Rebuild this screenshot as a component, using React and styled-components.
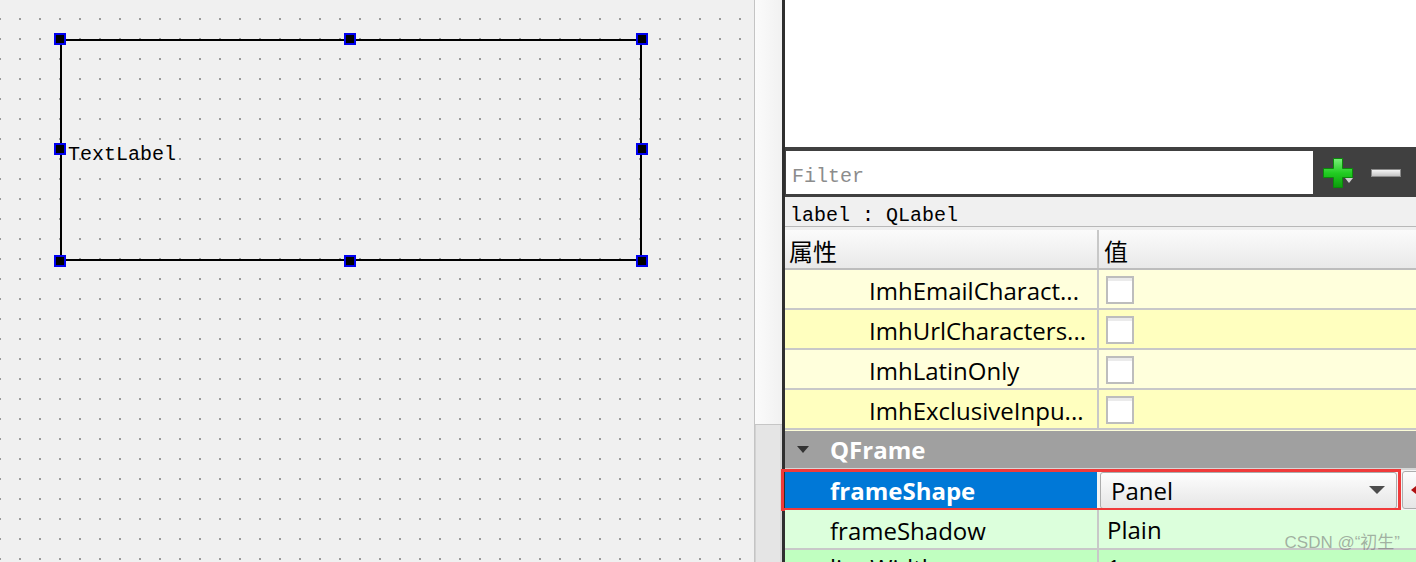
import styled, { createGlobalStyle } from "styled-components";

const GlobalStyle = createGlobalStyle`
  *, *::before, *::after { box-sizing: border-box; }
  html, body { margin: 0; padding: 0; overflow: hidden; background: #f0f0f0; }
  body { font-family: "Open Sans", "Noto Sans CJK SC", sans-serif; color: #000; }
`;

const Screen = styled.div`
  position: relative;
  display: flex;
  width: 1416px;
  height: 562px;
  overflow: hidden;
`;

/* ---------- form canvas ---------- */

const FormCanvas = styled.div`
  position: relative;
  flex: 0 0 754px;
  height: 100%;
  background-color: #f0f0f0;
  background-image: conic-gradient(at 2px 2px, transparent 75%, #9a9a9a 0);
  background-size: 20px 20px;
  background-position: 19px 18px;
`;

const LabelWidget = styled.div`
  position: absolute;
  left: 60px;
  top: 39px;
  width: 582px;
  height: 222px;
  border: 2px solid #000;
  display: flex;
  align-items: center;
`;

const LabelText = styled.span`
  font-family: "Liberation Mono", monospace;
  font-size: 20px;
  padding: 8px 0 0 6px;
`;

const Handle = styled.div`
  position: absolute;
  left: ${(p) => p.$x - 6}px;
  top: ${(p) => p.$y - 6}px;
  width: 12px;
  height: 12px;
  background: #000;
  border: 2px solid #0000f0;
`;

/* ---------- splitter strip ---------- */

const Splitter = styled.div`
  flex: 0 0 28px;
  display: flex;
  flex-direction: column;
  border-left: 1px solid #c4c4c4;
`;

const SplitterTop = styled.div`
  flex: 0 0 425px;
  background: linear-gradient(to right, #fbfbfb, #f1f1f1);
  border-bottom: 1px solid #c6c6c6;
`;

const SplitterBottom = styled.div`
  flex: 1;
  background: #e5e5e5;
  border-left: 1px solid #d2d2d2;
  border-right: 2px solid #d8d8d8;
`;

/* ---------- property editor ---------- */

const Panel = styled.div`
  flex: 1;
  min-width: 0;
  display: flex;
  flex-direction: column;
  border-left: 3px solid #2f2f2f;
  background: #fff;

  & > * { flex-shrink: 0; }
`;

const TopArea = styled.div`
  height: 147px;
  background: #fff;
`;

const FilterBar = styled.div`
  height: 50px;
  display: flex;
  align-items: center;
  padding: 4px 0 3px 1px;
  background: #404040;
`;

const FilterInput = styled.input`
  flex: 0 0 527px;
  height: 43px;
  border: none;
  outline: none;
  padding: 8px 6px 0;
  font-family: "Liberation Mono", monospace;
  font-size: 20px;
  background: #fff;
  &::placeholder { color: #8c8c8c; }
`;

const PlusIcon = styled.svg`
  margin-left: 10px;
  flex: 0 0 30px;
`;

const MinusIcon = styled.div`
  margin-left: 18px;
  width: 30px;
  height: 8px;
  border: 1px solid #8a8a8a;
  background: linear-gradient(#f4f4f4, #c4c4c4);
`;

const ObjectRow = styled.div`
  height: 30px;
  padding: 8px 0 0 5px;
  font-family: "Liberation Mono", monospace;
  font-size: 20px;
  line-height: 21px;
  background: #f0f0f0;
  border-bottom: 1px solid #b8b8b8;
`;

const Header = styled.div`
  height: 43px;
  display: flex;
  border-top: 3px solid #efefef;
  border-bottom: 2px solid #bdbdbd;
  background: linear-gradient(#fbfbfb, #e9e9e9);
  font-family: "Noto Sans CJK SC", sans-serif;
  font-size: 24px;
  line-height: 34px;
`;

const HeaderCell = styled.div`
  flex: ${(p) => (p.$name ? "0 0 314px" : "1")};
  padding: 4px 0 0 ${(p) => (p.$name ? 4 : 5)}px;
  border-right: ${(p) => (p.$name ? "2px solid #c8c8c8" : "none")};
`;

const PropRow = styled.div`
  position: relative;
  height: 40px;
  display: flex;
  background: ${(p) => p.$bg};
  border-bottom: ${(p) => (p.$noBorder ? "none" : "2px solid #c8c8c8")};
  font-size: 24px;
`;

const NameCell = styled.div`
  flex: 0 0 314px;
  padding: ${(p) => (p.$lift ? 0 : 3)}px 0 0 ${(p) => p.$indent}px;
  line-height: 35px;
  white-space: nowrap;
  overflow: hidden;
  border-right: 2px solid ${(p) => (p.$selected ? "#f4f4f4" : "#c8c8c8")};
  background: ${(p) => (p.$selected ? "#0078d7" : "transparent")};
  color: ${(p) => (p.$selected ? "#fff" : "#000")};
  font-weight: ${(p) => (p.$selected ? 700 : 400)};
`;

const ValueCell = styled.div`
  flex: 1;
  display: flex;
  align-items: ${(p) => (p.$lift ? "flex-start" : "center")};
  padding-left: ${(p) => p.$pad ?? 7}px;
  background: ${(p) => p.$bg || "transparent"};
  white-space: nowrap;
  overflow: hidden;
  line-height: ${(p) => (p.$lift ? 35 : 32)}px;
`;

const ValueText = styled.span`
  padding-top: ${(p) => (p.$lift ? 0 : 2)}px;
`;

const CheckBox = styled.div`
  width: 28px;
  height: 28px;
  margin-top: 2px;
  border: 2px solid #bdbdbd;
  background: linear-gradient(#ebebeb 0, #ebebeb 3px, #fff 3px);
`;

const GroupRow = styled.div`
  height: 40px;
  display: flex;
  align-items: center;
  padding-left: 12px;
  background: #a0a0a0;
  border-top: 1px solid #fdfdd8;
  border-bottom: 2px solid #d6d6d6;
  color: #fff;
  font-weight: 700;
  font-size: 24px;
  line-height: 32px;
`;

const GroupArrow = styled.span`
  width: 0;
  height: 0;
  border-left: 6px solid transparent;
  border-right: 6px solid transparent;
  border-top: 7px solid #333;
  margin-right: 21px;
`;

const RedFrame = styled.div`
  position: absolute;
  left: -4px;
  top: -1px;
  right: 15px;
  bottom: -1px;
  border: 3px solid #f03a3a;
  pointer-events: none;
`;

const ComboBox = styled.div`
  flex: 0 0 297px;
  height: 37px;
  display: flex;
  align-items: center;
  justify-content: space-between;
  padding: 0 11px 0 10px;
  border: 1px solid #acacac;
  border-radius: 3px;
  background: linear-gradient(#fdfdfd, #e6e6e6);
`;

const ComboArrow = styled.span`
  width: 0;
  height: 0;
  border-left: 8px solid transparent;
  border-right: 8px solid transparent;
  border-top: 8px solid #4d4d4d;
`;

const ResetButton = styled.div`
  flex: 0 0 24px;
  height: 38px;
  margin-left: 5px;
  display: flex;
  align-items: center;
  padding-left: 8px;
  border: 1px solid #adadad;
  border-radius: 3px;
  background: linear-gradient(#fdfdfd, #e6e6e6);
`;

const Watermark = styled.div`
  position: absolute;
  right: 16px;
  bottom: 9px;
  font-family: "Liberation Sans", "Noto Sans CJK SC", sans-serif;
  font-size: 17px;
  color: rgba(110, 110, 110, 0.55);
`;

const imhRows = [
  { name: "ImhEmailCharact...", bg: "#ffffdc" },
  { name: "ImhUrlCharacters...", bg: "#ffffbf" },
  { name: "ImhLatinOnly", bg: "#ffffdc" },
  { name: "ImhExclusiveInpu...", bg: "#ffffbf" },
];

const handles = [
  [60, 39], [350, 39], [642, 39],
  [60, 149], [642, 149],
  [60, 261], [350, 261], [642, 261],
];

export default function App() {
  return (
    <>
      <GlobalStyle />
      <Screen>
        <FormCanvas>
          <LabelWidget>
            <LabelText>TextLabel</LabelText>
          </LabelWidget>
          {handles.map(([x, y]) => (
            <Handle key={`${x}-${y}`} $x={x} $y={y} />
          ))}
        </FormCanvas>

        <Splitter>
          <SplitterTop />
          <SplitterBottom />
        </Splitter>

        <Panel>
          <TopArea />
          <FilterBar>
            <FilterInput placeholder="Filter" />
            <PlusIcon width="30" height="30" viewBox="0 0 30 30">
              <defs>
                <linearGradient id="plusFill" x1="0" y1="0" x2="0" y2="1">
                  <stop offset="0" stopColor="#7af07a" />
                  <stop offset="0.5" stopColor="#22cc22" />
                  <stop offset="1" stopColor="#0c9c0c" />
                </linearGradient>
              </defs>
              <path
                d="M10.5 0.5h9v10h10v9h-10v10h-9v-10h-10v-9h10z"
                fill="url(#plusFill)"
                stroke="#0b8a0b"
              />
              <path d="M22 20h8l-4 5z" fill="#cfcfcf" />
            </PlusIcon>
            <MinusIcon />
          </FilterBar>

          <ObjectRow>label : QLabel</ObjectRow>

          <Header>
            <HeaderCell $name>属性</HeaderCell>
            <HeaderCell>值</HeaderCell>
          </Header>

          {imhRows.map((row) => (
            <PropRow key={row.name} $bg={row.bg}>
              <NameCell $indent={84}>{row.name}</NameCell>
              <ValueCell>
                <CheckBox />
              </ValueCell>
            </PropRow>
          ))}

          <GroupRow>
            <GroupArrow />
            QFrame
          </GroupRow>

          <PropRow $bg="#f4f4f4" $noBorder>
            <NameCell $indent={45} $selected>frameShape</NameCell>
            <ValueCell $pad={1}>
              <ComboBox>
                <ValueText>Panel</ValueText>
                <ComboArrow />
              </ComboBox>
              <ResetButton>
                <svg width="10" height="10" viewBox="0 0 10 10">
                  <path d="M0 5l5-4v8z" fill="#b01010" />
                </svg>
              </ResetButton>
            </ValueCell>
            <RedFrame />
          </PropRow>

          <PropRow $bg="#dcffdc">
            <NameCell $indent={45}>frameShadow</NameCell>
            <ValueCell $pad={8}>
              <ValueText>Plain</ValueText>
            </ValueCell>
          </PropRow>

          <PropRow $bg="#c0ffc0">
            <NameCell $indent={45} $lift>lineWidth</NameCell>
            <ValueCell $pad={8} $lift>
              <ValueText $lift>1</ValueText>
            </ValueCell>
          </PropRow>
        </Panel>

        <Watermark>CSDN @“初生”</Watermark>
      </Screen>
    </>
  );
}
